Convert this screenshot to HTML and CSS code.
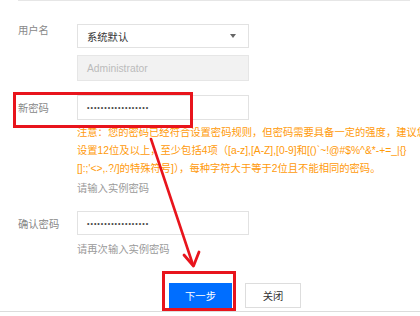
FILE: index.html
```html
<!DOCTYPE html>
<html lang="zh-CN">
<head>
<meta charset="utf-8">
<link rel="stylesheet" href="styles.css">
</head>
<body>
<div class="page">
  <div class="topline"></div>
  <div class="form">
    <div class="row">
      <div class="label label-top">用户名</div>
      <div class="field select">
        <span>系统默认</span>
        <span class="caret"></span>
      </div>
    </div>
    <div class="row row-admin">
      <div class="label"></div>
      <div class="field disabled">Administrator</div>
    </div>
    <div class="row row-pwd">
      <div class="label">新密码</div>
      <div class="field pwd"><span class="dots">••••••••••••••••••</span></div>
    </div>
    <div class="warn">
      <span class="line">注意：您的密码已经符合设置密码规则，但密码需要具备一定的强度，建议您</span>
      <span class="line">设置12位及以上，至少包括4项（[a-z],[A-Z],[0-9]和[()`~!@#$%^&amp;*-+=_|{}</span>
      <span class="line">[]:;'&lt;&gt;,.?/]的特殊符号]），每种字符大于等于2位且不能相同的密码。</span>
    </div>
    <div class="hint hint-1">请输入实例密码</div>
    <div class="row row-confirm">
      <div class="label">确认密码</div>
      <div class="field pwd"><span class="dots">••••••••••••••••••</span></div>
    </div>
    <div class="hint hint-2">请再次输入实例密码</div>
    <div class="buttons">
      <div class="btn primary">下一步</div>
      <div class="btn">关闭</div>
    </div>
  </div>
  <div class="bottomline"></div>

  <div class="mark mark-pwd"></div>
  <div class="mark mark-btn"></div>
  <svg class="arrow" width="420" height="316" viewBox="0 0 420 316">
    <line x1="151" y1="139" x2="193" y2="265" stroke="#e8141c" stroke-width="2.6" stroke-linecap="round"/>
    <polyline points="184,255 193.5,266 199,252" fill="none" stroke="#e8141c" stroke-width="2.8" stroke-linecap="round" stroke-linejoin="round"/>
  </svg>
</div>
</body>
</html>
```

FILE: styles.css
```css
html, body {
  margin: 0;
  padding: 0;
  background: #fff;
}

body {
  font-family: "Liberation Sans", "Noto Sans CJK SC", sans-serif;
  font-size: 10.3px;
  color: #333;
}

.page {
  position: relative;
  width: 420px;
  height: 316px;
  overflow: hidden;
}

.topline {
  margin: 0 10px 0 18px;
  border-top: 1px solid #e6e6e6;
}

.form {
  padding-top: 23px;
  display: flex;
  flex-direction: column;
}

.row {
  display: flex;
  align-items: center;
}

.label {
  width: 59px;
  padding-left: 18px;
  color: #888;
  white-space: nowrap;
}

.label-top {
  align-self: flex-start;
  padding-top: 1px;
  line-height: 11px;
}

.field {
  box-sizing: border-box;
  width: 172px;
  height: 24px;
  border: 1px solid #e2e2e2;
  padding: 0 9px;
  display: flex;
  align-items: center;
  white-space: nowrap;
}

.select {
  justify-content: space-between;
  color: #333;
}

.caret {
  width: 0;
  height: 0;
  border-left: 3.5px solid transparent;
  border-right: 3.5px solid transparent;
  border-top: 4px solid #666;
  margin-right: 3px;
}

.row-admin {
  margin-top: 7px;
}

.disabled {
  height: 26px;
  background: #f2f2f2;
  border-color: #e6e6e6;
  color: #bbb;
}

.row-pwd {
  margin-top: 14px;
}

.pwd {
  height: 25px;
}

.dots {
  font-size: 7px;
  letter-spacing: 1px;
  color: #444;
}

.warn {
  margin-top: 4px;
  padding-left: 77px;
  color: #ff9a0a;
  line-height: 18px;
  white-space: nowrap;
}

.warn .line {
  display: block;
}

.hint {
  padding-left: 77px;
  line-height: 18px;
  color: #9a9a9a;
}

.hint-1 {
  margin-top: 2px;
}

.row-confirm {
  margin-top: 13px;
}

.row-confirm .pwd {
  height: 24px;
}

.hint-2 {
  margin-top: 6px;
}

.buttons {
  margin-top: 24px;
  padding-left: 169px;
  display: flex;
  gap: 13px;
}

.btn {
  box-sizing: border-box;
  width: 56px;
  height: 25px;
  border: 1px solid #ddd;
  display: flex;
  align-items: center;
  justify-content: center;
  color: #333;
  background: #fff;
}

.btn.primary {
  width: 63px;
  background: #006eff;
  border-color: #006eff;
  color: #fff;
}

.bottomline {
  margin-top: 3px;
  border-top: 1px solid #dcdcdc;
}

.mark {
  position: absolute;
  box-sizing: border-box;
  border: 3px solid #e8141c;
}

.mark-pwd {
  left: 13px;
  top: 92px;
  width: 180px;
  height: 36px;
}

.mark-btn {
  left: 162px;
  top: 271px;
  width: 74px;
  height: 40px;
}

.arrow {
  position: absolute;
  left: 0;
  top: 0;
}
```
